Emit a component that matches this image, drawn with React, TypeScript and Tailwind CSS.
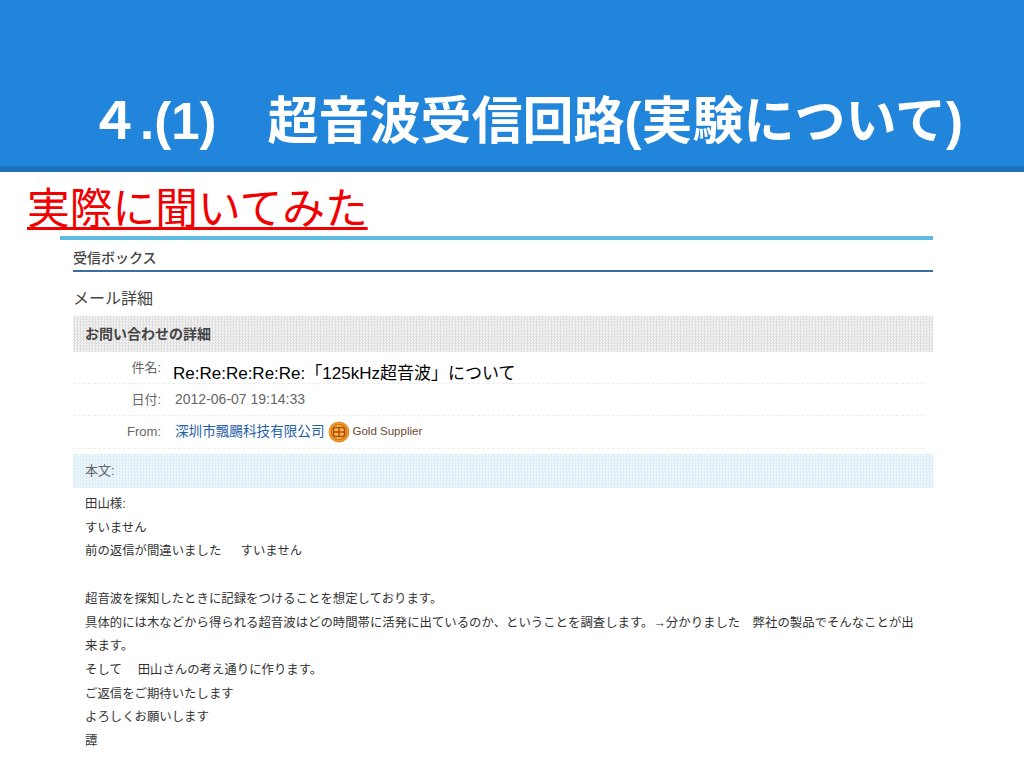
const jp = "font-['Liberation_Sans','Noto_Sans_CJK_JP',sans-serif]";

const bodyLines = [
  "田山様:",
  "すいません",
  "前の返信が間違いました　\u00a0\u00a0すいません",
  "\u00a0",
  "超音波を探知したときに記録をつけることを想定しております。",
  "具体的には木などから得られる超音波はどの時間帯に活発に出ているのか、ということを調査します。→分かりました　弊社の製品でそんなことが出来ます。",
  "そして　\u00a0田山さんの考え通りに作ります。",
  "ご返信をご期待いたします",
  "よろしくお願いします",
  "譚",
];

function Row({ label, children, className }: { label: string; children: React.ReactNode; className: string }) {
  return (
    <div className={`flex items-center border-b border-dashed border-[#ececec] w-[851px] ${className}`}>
      <div className="w-[88px] text-right text-[13px] text-[#666] shrink-0">{label}</div>
      <div className="ml-[12px] flex items-center">{children}</div>
    </div>
  );
}

export default function App() {
  return (
    <div className={`w-[1024px] h-[768px] overflow-hidden bg-white ${jp}`}>
      {/* header */}
      <div className="h-[172px] bg-[#2185dc] border-b-[6px] border-[#1d71b8] pt-[90px] pl-[89px]">
        <h1 className="text-[51px] leading-[64px] font-bold text-white whitespace-nowrap">
          ４<span className="font-['Liberation_Sans',sans-serif]">.(1)</span>　超音波受信回路<span className="font-['Liberation_Sans',sans-serif]">(</span>実験について<span className="font-['Liberation_Sans',sans-serif]">)</span>
        </h1>
      </div>

      <div className="pl-[27px] pt-[7px] h-[64px]">
        <span className="text-[42.75px] leading-[60px] text-[#f00000] underline decoration-[3px] underline-offset-[3px] whitespace-nowrap">実際に聞いてみた</span>
      </div>

      {/* mail screenshot */}
      <div className="ml-[60px] w-[873px] border-t-[4px] border-[#5bbcdf]">
        <div className="ml-[13px] w-[860px]">
          <div className="h-[32px] pt-[8px] border-b-2 border-[#3a6ea5] text-[14px] leading-[20px] text-[#444] font-medium">受信ボックス</div>
          <div className="pt-[16px] h-[44px] text-[16px] leading-[22px] text-[#444]">メール詳細</div>
          <div className="h-[36px] pl-[12px] flex items-center text-[14px] font-bold text-[#444] bg-[#e6e6e6] bg-[repeating-conic-gradient(#dedede_0_25%,#f4f4f4_0_50%)] bg-[length:3px_3px]">お問い合わせの詳細</div>

          <Row label="件名:" className="h-[32px]">
            <span className="text-[17px] leading-[20px] text-black whitespace-nowrap mt-[12px]">Re:Re:Re:Re:Re:「125kHz超音波」について</span>
          </Row>
          <Row label="日付:" className="h-[32px]">
            <span className="text-[14px] text-[#666] ml-[2px]">2012-06-07 19:14:33</span>
          </Row>
          <Row label="From:" className="h-[33px]">
            <span className="text-[13.6px] text-[#1f5fa8] ml-[2px] whitespace-nowrap">深圳市飄颺科技有限公司</span>
            <svg width="22" height="22" viewBox="0 0 22 22" className="ml-[3px]">
              <circle cx="11" cy="11" r="10.5" fill="#e8962a" />
              <circle cx="11" cy="11" r="7.5" fill="#f6c04d" stroke="#c96a10" />
              <path d="M7.5 6.5h7a2 2 0 0 1 2 2v5a2 2 0 0 1-2 2h-7a2 2 0 0 1-2-2v-5a2 2 0 0 1 2-2zM5.5 11h11M11 6.5v9" fill="none" stroke="#b3470c" strokeWidth="1.5" />
            </svg>
            <span className="ml-[3px] text-[11.5px] text-[#6b4a32] whitespace-nowrap">Gold Supplier</span>
          </Row>
        </div>
        <div className="ml-[13px] mt-[5px] h-[34px] pl-[12px] flex items-center text-[13px] text-[#666] bg-[#e4f1fa] bg-[repeating-conic-gradient(#dcedf8_0_25%,#f0f8fd_0_50%)] bg-[length:3px_3px]">本文:</div>
        <div className="ml-[25px] mt-[5px] w-[840px] text-[12.4px] leading-[23.7px] text-[#333]">
          {bodyLines.map((l, i) => (
            <div key={i}>{l}</div>
          ))}
        </div>
      </div>
    </div>
  );
}
